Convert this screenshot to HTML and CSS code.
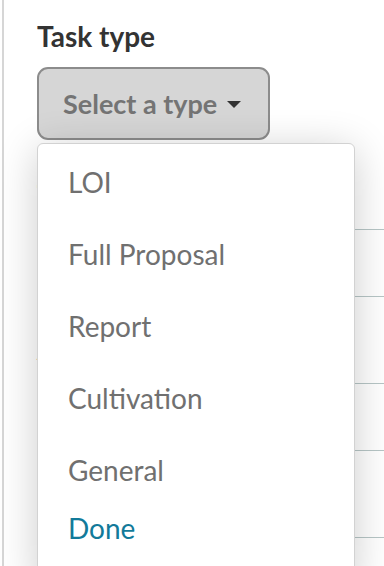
FILE: index.html
```html
<!DOCTYPE html>
<html lang="en">
<head>
    <meta charset="UTF-8">
    <meta name="viewport" content="width=device-width, initial-scale=1.0">
    <title>New task</title>
    <link rel="stylesheet" href="styles.css">
</head>
<body>
    <div class="panel">
        <div class="field">
            <h3 class="field-label">Task type</h3>
            <div class="select">
                <button class="select-btn" type="button">Select a type <span class="caret"></span></button>

                <!-- open dropdown -->
                <ul class="menu">
                    <li class="menu-item">LOI</li>
                    <li class="menu-item">Full Proposal</li>
                    <li class="menu-item">Report</li>
                    <li class="menu-item">Cultivation</li>
                    <li class="menu-item">General</li>
                    <li class="menu-item done">Done</li>
                </ul>
            </div>
        </div>

        <div class="field">
            <label class="field-label">Title</label>
            <input class="text-input" type="text">
        </div>

        <div class="field">
            <label class="field-label">Assigned to</label>
            <input class="text-input" type="text">
        </div>

        <div class="field">
            <label class="field-label">Comments</label>
            <input class="text-input" type="text">
        </div>
    </div>
</body>
</html>
```

FILE: styles.css
```css
html, body {
    margin: 0;
    height: 100%;
    overflow: hidden;
    background: #fff;
}

body {
    font-family: Lato, "Open Sans", Arial, sans-serif;
}

.panel {
    margin-left: 2px;
    min-height: 100%;
    border-left: 2px solid #d6d6d6;
    padding: 19px 0 0 33px;
}

.field {
    margin-bottom: 35px;
}

.field:first-child {
    margin-bottom: 38px;
}

.field-label {
    display: block;
    margin: 0 0 17px;
    font-size: 28px;
    line-height: 34px;
    font-weight: 700;
    color: #333;
}

.field:first-child .field-label {
    margin-bottom: 14px;
}

.select {
    position: relative;
}

.select-btn {
    display: flex;
    align-items: center;
    gap: 10px;
    width: 233px;
    height: 73px;
    padding: 0 0 0 24px;
    border: 2px solid #8c8c8c;
    border-radius: 11px;
    background: #d6d6d6;
    font-family: inherit;
    font-size: 27px;
    font-weight: 700;
    color: #747474;
}

.caret {
    width: 0;
    height: 0;
    border-left: 7px solid transparent;
    border-right: 7px solid transparent;
    border-top: 7px solid #333;
    margin-top: 2px;
}

.menu {
    position: absolute;
    top: 76px;
    left: 0;
    width: 316px;
    margin: 0;
    padding: 2px 0 0;
    list-style: none;
    background: #fff;
    border: 1px solid #d2d2d2;
    border-radius: 6px;
    box-shadow: 0 6px 40px rgba(0, 0, 0, 0.2);
    z-index: 5;
}

.menu-item {
    padding: 19px 30px;
    font-size: 28px;
    line-height: 34px;
    color: #707070;
}

.menu-item.done {
    padding-top: 5px;
    padding-bottom: 40px;
    color: #127a9a;
}

.text-input {
    display: block;
    box-sizing: border-box;
    width: 420px;
    height: 68px;
    border: 1px solid #b7c6c6;
    border-radius: 9px;
    background: #fff;
}
```
